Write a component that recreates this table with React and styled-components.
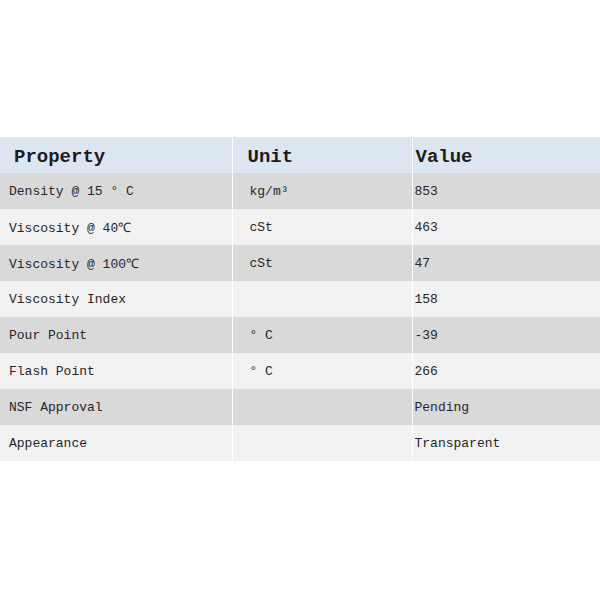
import React from "react";
import styled, { createGlobalStyle } from "styled-components";

const Global = createGlobalStyle`
  html, body { margin: 0; padding: 0; background: #ffffff; }
  body { font-family: "Liberation Mono", "DejaVu Sans Mono", monospace; }
`;

const Page = styled.div`
  padding-top: 137px;
  width: 600px;
`;

const Table = styled.table`
  width: 600px;
  border-collapse: collapse;
  table-layout: fixed;
`;

const HeadCell = styled.th`
  height: 36px;
  box-sizing: border-box;
  padding: 4px 0 0 ${(p) => p.$pad}px;
  background: #dce6f1;
  color: #1c1c1c;
  font-family: "Liberation Mono", "DejaVu Sans Mono", monospace;
  font-size: 19px;
  font-weight: bold;
  text-align: left;
  vertical-align: middle;
  border-right: 1px solid #ffffff;
  &:last-child { border-right: none; }
`;

const Row = styled.tr`
  background: ${(p) => (p.$dark ? "#d9d9d9" : "#f2f2f2")};
`;

const Cell = styled.td`
  height: 36px;
  padding: 0 0 0 ${(p) => p.$pad}px;
  color: #262626;
  font-family: "Liberation Mono", "DejaVu Sans Mono", monospace;
  font-size: 13px;
  text-align: left;
  vertical-align: middle;
  white-space: nowrap;
  border-right: 1px solid #ffffff;
  &:last-child { border-right: none; }
`;

const rows = [
  ["Density @ 15 ° C", "kg/m³", "853"],
  ["Viscosity @ 40℃", "cSt", "463"],
  ["Viscosity @ 100℃", "cSt", "47"],
  ["Viscosity Index", "", "158"],
  ["Pour Point", "° C", "-39"],
  ["Flash Point", "° C", "266"],
  ["NSF Approval", "", "Pending"],
  ["Appearance", "", "Transparent"],
];

export default function App() {
  return (
    <Page>
      <Global />
      <Table>
        <colgroup>
          <col style={{ width: 232 }} />
          <col style={{ width: 180 }} />
          <col />
        </colgroup>
        <thead>
          <tr>
            <HeadCell $pad={14}>Property</HeadCell>
            <HeadCell $pad={15}>Unit</HeadCell>
            <HeadCell $pad={3}>Value</HeadCell>
          </tr>
        </thead>
        <tbody>
          {rows.map((r, i) => (
            <Row key={i} $dark={i % 2 === 0}>
              <Cell $pad={9}>{r[0]}</Cell>
              <Cell $pad={17}>{r[1]}</Cell>
              <Cell $pad={2}>{r[2]}</Cell>
            </Row>
          ))}
        </tbody>
      </Table>
    </Page>
  );
}
